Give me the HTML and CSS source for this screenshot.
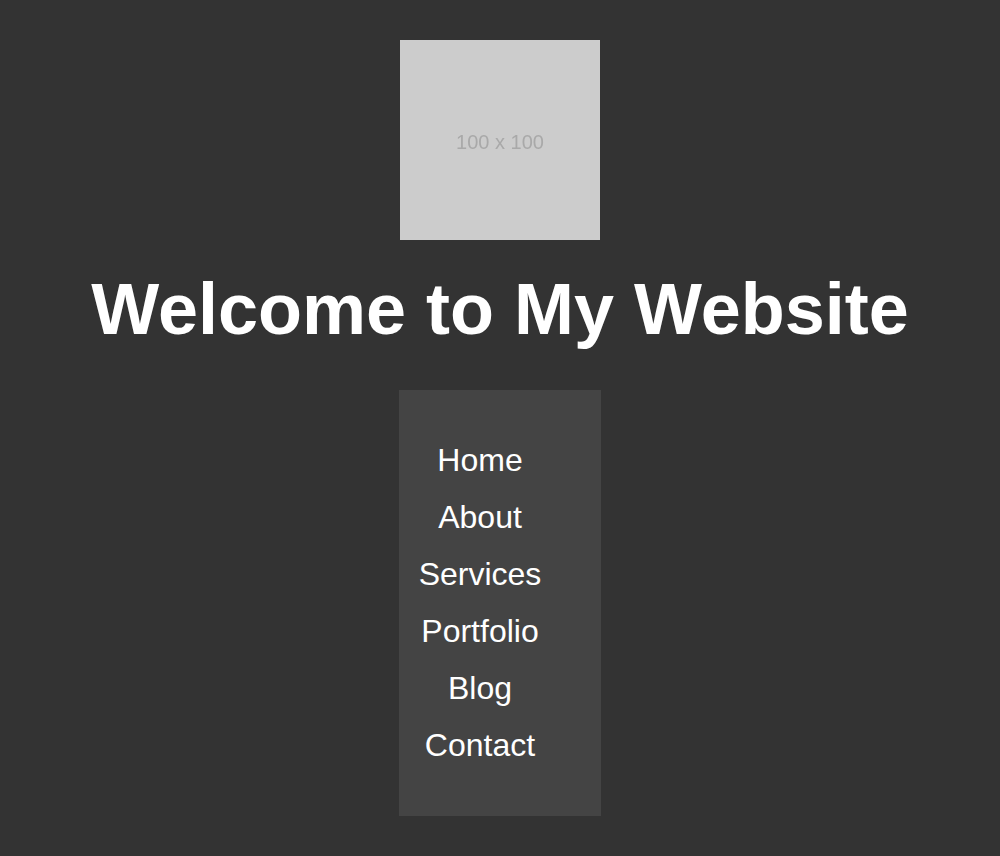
FILE: index.html
```html
<!DOCTYPE html>
<html lang="en">
<head>
<meta charset="utf-8">
<title>My Website</title>
<link rel="stylesheet" href="styles.css">
</head>
<body>
<header class="page">
  <div class="logo"><span class="logo-text">100 x 100</span></div>
  <h1 class="title">Welcome to My Website</h1>
  <nav class="menu">
    <ul class="menu-list">
      <li><a href="#">Home</a></li>
      <li><a href="#">About</a></li>
      <li><a href="#">Services</a></li>
      <li><a href="#">Portfolio</a></li>
      <li><a href="#">Blog</a></li>
      <li><a href="#">Contact</a></li>
    </ul>
  </nav>
</header>
</body>
</html>
```
FILE: styles.css
```css
html, body {
  margin: 0;
  padding: 0;
  background: #333333;
  font-family: "Liberation Sans", Arial, sans-serif;
  color: #ffffff;
}
.page {
  display: flex;
  flex-direction: column;
  align-items: center;
  padding-top: 40px;
}
.logo {
  width: 200px;
  height: 200px;
  background: #cccccc;
  display: flex;
  align-items: center;
  justify-content: center;
}
.logo-text {
  font-size: 20px;
  color: #a9a9a9;
  filter: blur(0.4px);
  margin-top: 4px;
}
.title {
  margin: 28px 0 39px;
  font-size: 72px;
  line-height: 83px;
  font-weight: bold;
  white-space: nowrap;
}
.menu {
  box-sizing: border-box;
  width: 202px;
  background: #444444;
  padding: 52px 40px 52px 0;
}
.menu-list {
  list-style: none;
  margin: 0;
  padding: 0;
  display: flex;
  flex-direction: column;
  gap: 20px;
  text-align: center;
}
.menu-list li {
  font-size: 32px;
  line-height: 37px;
}
.menu-list a {
  color: #ffffff;
  text-decoration: none;
}
```
